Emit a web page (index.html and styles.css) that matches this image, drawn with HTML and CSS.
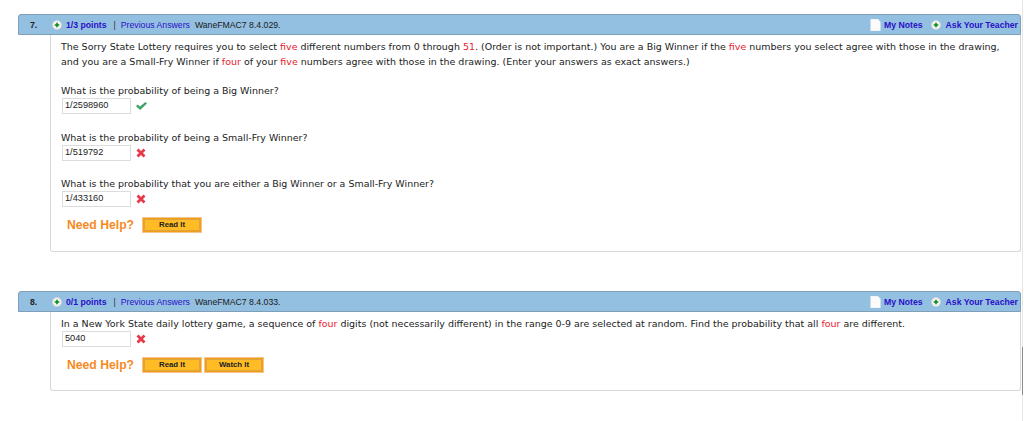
FILE: index.html
```html
<!DOCTYPE html>
<html lang="en">
<head>
<meta charset="utf-8">
<title>Questions</title>
<link rel="stylesheet" href="styles.css">
</head>
<body>
<section class="question q7">
  <header class="bar">
    <b class="num">7.</b>
    <svg class="plus" viewBox="0 0 10 10"><circle cx="5" cy="5" r="4.6" fill="#f2f2ee" stroke="#c9d2d6" stroke-width=".6"/><path d="M5 2.7v4.6M2.7 5h4.6" stroke="#0a8a1e" stroke-width="1.6"/></svg>
    <b class="points">1/3 points</b>
    <span class="sep">|</span>
    <span class="prev">Previous Answers</span>
    <span class="code">WaneFMAC7 8.4.029.</span>
    <svg class="note" viewBox="0 0 10 11"><path d="M.5 0H7l2.5 2.5V11H.5z" fill="#fbfbfb" stroke="#d8e2e8" stroke-width=".5"/></svg>
    <b class="link notes">My Notes</b>
    <svg class="plus plus-r" viewBox="0 0 10 10"><circle cx="5" cy="5" r="4.6" fill="#f2f2ee" stroke="#c9d2d6" stroke-width=".6"/><path d="M5 2.7v4.6M2.7 5h4.6" stroke="#0a8a1e" stroke-width="1.6"/></svg>
    <b class="link">Ask Your Teacher</b>
  </header>
  <div class="body tall">
    <p class="text two">The Sorry State Lottery requires you to select <em>five</em> different numbers from 0 through <em>51</em>. (Order is not important.) You are a Big Winner if the <em>five</em> numbers you select agree with those in the drawing, and you are a Small-Fry Winner if <em>four</em> of your <em>five</em> numbers agree with those in the drawing. (Enter your answers as exact answers.)</p>
    <p class="text ask first">What is the probability of being a Big Winner?</p>
    <div class="answer"><span class="input">1/2598960</span><svg class="mark check" viewBox="0 0 11 8"><path d="M0 4.2L1.6 2.6 4 4.6 9.4 0 11 1.4 4.2 8z" fill="#3fa565"/></svg></div>
    <p class="text ask">What is the probability of being a Small-Fry Winner?</p>
    <div class="answer"><span class="input">1/519792</span><svg class="mark" viewBox="0 0 10 10"><path d="M1.5 1.5l7 7M8.5 1.5l-7 7" stroke="#e8394a" stroke-width="2.8"/></svg></div>
    <p class="text ask">What is the probability that you are either a Big Winner or a Small-Fry Winner?</p>
    <div class="answer"><span class="input">1/433160</span><svg class="mark" viewBox="0 0 10 10"><path d="M1.5 1.5l7 7M8.5 1.5l-7 7" stroke="#e8394a" stroke-width="2.8"/></svg></div>
    <div class="help"><span class="need">Need Help?</span><span class="btn">Read It</span></div>
  </div>
</section>
<section class="question q8">
  <header class="bar">
    <b class="num">8.</b>
    <svg class="plus" viewBox="0 0 10 10"><circle cx="5" cy="5" r="4.6" fill="#f2f2ee" stroke="#c9d2d6" stroke-width=".6"/><path d="M5 2.7v4.6M2.7 5h4.6" stroke="#0a8a1e" stroke-width="1.6"/></svg>
    <b class="points">0/1 points</b>
    <span class="sep">|</span>
    <span class="prev">Previous Answers</span>
    <span class="code">WaneFMAC7 8.4.033.</span>
    <svg class="note" viewBox="0 0 10 11"><path d="M.5 0H7l2.5 2.5V11H.5z" fill="#fbfbfb" stroke="#d8e2e8" stroke-width=".5"/></svg>
    <b class="link notes">My Notes</b>
    <svg class="plus plus-r" viewBox="0 0 10 10"><circle cx="5" cy="5" r="4.6" fill="#f2f2ee" stroke="#c9d2d6" stroke-width=".6"/><path d="M5 2.7v4.6M2.7 5h4.6" stroke="#0a8a1e" stroke-width="1.6"/></svg>
    <b class="link">Ask Your Teacher</b>
  </header>
  <div class="body short">
    <p class="text">In a New York State daily lottery game, a sequence of <em>four</em> digits (not necessarily different) in the range 0-9 are selected at random. Find the probability that all <em>four</em> are different.</p>
    <div class="answer"><span class="input">5040</span><svg class="mark" viewBox="0 0 10 10"><path d="M1.5 1.5l7 7M8.5 1.5l-7 7" stroke="#e8394a" stroke-width="2.8"/></svg></div>
    <div class="help"><span class="need">Need Help?</span><span class="btn">Read It</span><span class="btn">Watch It</span></div>
  </div>
</section>
<div class="scroll-track"><div class="scroll-thumb"></div></div>
</body>
</html>
```
FILE: styles.css
```css
html, body { margin: 0; padding: 0; background: #fff; }
body { position: relative; width: 1024px; height: 421px; overflow: hidden; padding-top: 14px; box-sizing: border-box; font-family: "Liberation Sans", Arial, sans-serif; color: #222; }
.question { margin-left: 18px; width: 1003px; }
.q8 { margin-top: 39px; }
.bar { height: 21px; box-sizing: border-box; display: flex; align-items: center; background: #93bfe0; border: 1px solid #7f9fb8; border-radius: 3px 3px 0 0; font-size: 8.7px; color: #1a1a1a; padding-left: 11px; }
.num { width: 22px; color: #222; }
.plus { width: 10px; height: 10px; flex: none; }
.points { color: #2a10c8; margin-left: 4px; }
.sep { margin-left: 7px; color: #333; }
.prev { margin-left: 5px; color: #2a10c8; }
.code { margin-left: 5px; }
.note { width: 11px; height: 12px; margin-left: auto; margin-right: 3px; flex: none; }
.link { color: #2a10c8; }
.plus-r { margin-left: 8px; margin-right: 5px; }
.bar .link:last-child { margin-right: 2px; }
.body { margin-left: 32px; box-sizing: border-box; border: 1px solid #d8d8d8; border-top: 0; border-radius: 0 0 3px 3px; padding-left: 10px; }
.tall { height: 217px; padding-top: 5px; }
.short { height: 79px; padding-top: 5px; }
.text { margin: 0; font: 9.48px/14.5px "DejaVu Sans", Verdana, sans-serif; color: #222; }
.text em { font-style: normal; color: #e8212f; }
.ask { margin-top: 17px; }
.ask.first { margin-top: 15px; }
.answer { display: flex; align-items: center; height: 15px; }
.input { width: 69px; height: 16px; margin-left: 1px; box-sizing: border-box; border: 1px solid #dcdcdc; padding-left: 2px; font-size: 9.2px; line-height: 13px; color: #222; flex: none; }
.mark { width: 10px; height: 10px; margin-left: 5px; }
.check { width: 11px; height: 8px; }
.help { display: flex; align-items: center; height: 18px; margin-top: 9px; padding-left: 6px; gap: 2px; }
.need { font-size: 12.2px; font-weight: bold; color: #f58a1f; margin-right: 6px; }
.btn { width: 60px; height: 16px; box-sizing: border-box; border: 2px solid #f79c12; box-shadow: inset 0 0 0 1px #dba53f; outline: 1px solid #f3c590; outline-offset: -1px; background: #ffbc24; text-align: center; font-size: 7.8px; font-weight: bold; line-height: 12px; color: #222; }
.scroll-track { position: absolute; top: 0; bottom: 0; left: 1022px; width: 1px; background: #e6e6e6; }
.scroll-thumb { position: absolute; top: 347px; height: 48px; left: 0; width: 1px; background: #8a8a8a; }
```
